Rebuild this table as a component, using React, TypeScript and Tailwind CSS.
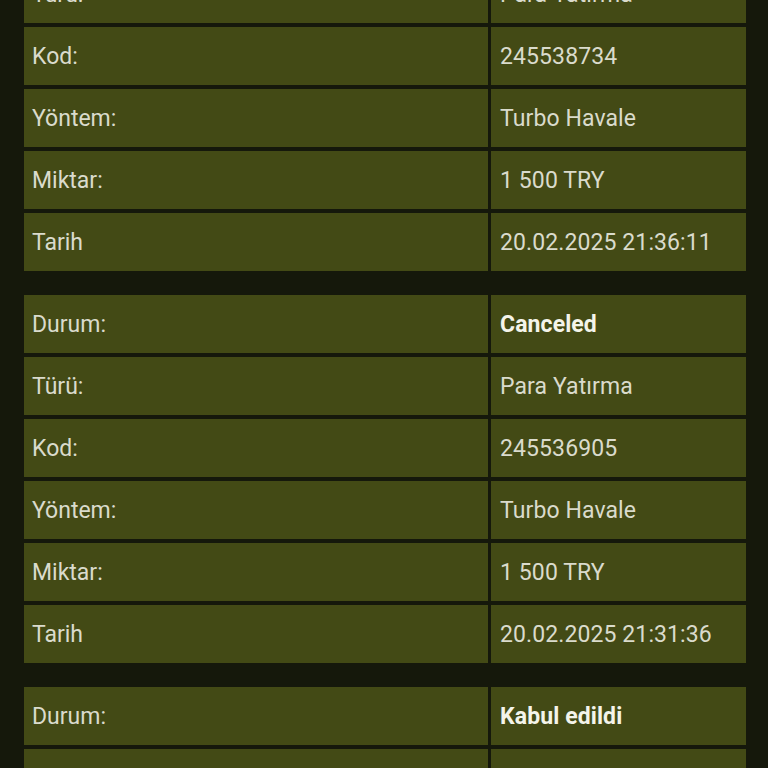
const txs = [
  { durum: "Canceled", turu: "Para Yatırma", kod: "245538734", yontem: "Turbo Havale", miktar: "1 500 TRY", tarih: "20.02.2025 21:36:11" },
  { durum: "Canceled", turu: "Para Yatırma", kod: "245536905", yontem: "Turbo Havale", miktar: "1 500 TRY", tarih: "20.02.2025 21:31:36" },
  { durum: "Kabul edildi", turu: "Para Yatırma", kod: "245530112", yontem: "Turbo Havale", miktar: "1 500 TRY", tarih: "20.02.2025 21:20:04" },
];

function Row({ label, value, bold }: { label: string; value: string; bold?: boolean }) {
  return (
    <>
      <div className="h-[58px] bg-[#434a15] flex items-center pl-[8px] pt-[3px] text-[23px] text-[#dadbcc]">{label}</div>
      <div
        className={`h-[58px] bg-[#434a15] flex items-center pl-[9px] pt-[3px] text-[23px] tracking-[0.1px] ${
          bold ? "font-bold text-[#f4f4ea]" : "text-[#dadbcc]"
        }`}
      >
        {value}
      </div>
    </>
  );
}

export default function App() {
  return (
    <div className="h-[768px] overflow-hidden bg-[#15180b]" style={{ fontFamily: "Roboto, 'Noto Sans', sans-serif" }}>
      <div className="flex flex-col gap-[24px] pl-[24px] pr-[22px] mt-[-97px]">
        {txs.map((t) => (
          <div key={t.kod} className="grid grid-cols-[464px_1fr] gap-x-[3px] gap-y-[4px]">
            <Row label="Durum:" value={t.durum} bold />
            <Row label="Türü:" value={t.turu} />
            <Row label="Kod:" value={t.kod} />
            <Row label="Yöntem:" value={t.yontem} />
            <Row label="Miktar:" value={t.miktar} />
            <Row label="Tarih" value={t.tarih} />
          </div>
        ))}
      </div>
    </div>
  );
}
